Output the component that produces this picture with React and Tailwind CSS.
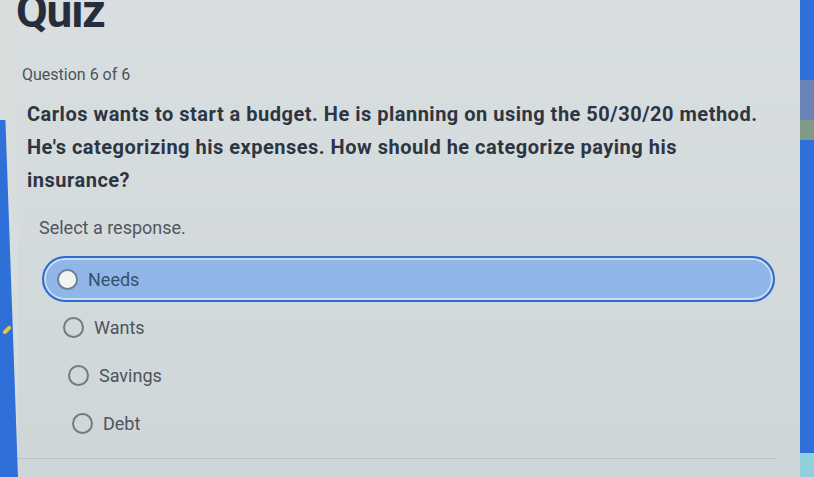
import React, { useState } from 'react';

const options = ['Needs', 'Wants', 'Savings', 'Debt'];
const indents = ['pl-[13px]', 'pl-[19px]', 'pl-[24px]', 'pl-[28px]'];

function Radio({ selected }) {
  return (
    <span
      className={
        'w-[21px] h-[21px] rounded-full border-2 shrink-0 ' +
        (selected ? 'bg-[#f2f4f4] border-[#6d7f92]' : 'bg-transparent border-[#737b82]')
      }
    />
  );
}

export default function App() {
  const [choice, setChoice] = useState('Needs');

  return (
    <div
      className="h-[477px] w-full flex overflow-hidden bg-[#d4dadb] text-[#2c3340]"
      style={{ fontFamily: 'Roboto, "Liberation Sans", sans-serif' }}
    >
      {/* left edge of the desk showing through */}
      <div className="w-[18px] shrink-0 flex flex-col bg-[#d7dddd]">
        <div className="h-[120px]" />
        <div className="flex-1 bg-[#2e6fd8] [clip-path:polygon(0_0,30%_0,100%_100%,0_100%)] flex flex-col">
          <div className="h-[205px]" />
          <span className="ml-[5px] w-[4px] h-[10px] rounded-full bg-[#e4c64a] rotate-45" />
        </div>
      </div>

      {/* Quiz card */}
      <div className="flex-1 flex flex-col bg-gradient-to-b from-[#d9dfe0] to-[#cfd6d7] pr-[25px]">
        <h1 className="text-[46px] font-bold leading-none tracking-tight text-[#262d3d] -mt-[12px] -ml-[2px]">
          Quiz
        </h1>

        <p className="mt-[29px] ml-[4px] text-[16px] leading-[24px] text-[#4b525c]">Question 6 of 6</p>

        <div className="mt-[11px] ml-[9px] text-[20px] font-bold tracking-[0.5px] leading-[33px] text-[#2e3542]">
          <span className="block whitespace-nowrap">Carlos wants to start a budget. He is planning on using the 50/30/20 method.</span>
          <span className="block whitespace-nowrap">He's categorizing his expenses. How should he categorize paying his</span>
          <span className="block">insurance?</span>
        </div>

        <p className="mt-[17px] ml-[21px] text-[18px] leading-[27px] text-[#4f565e]">Select a response.</p>

        <div className="mt-[15px] ml-[24px] flex flex-col gap-[2px]">
          {options.map((o, i) => {
            const sel = choice === o;
            return (
              <button
                key={o}
                onClick={() => setChoice(o)}
                className={
                  'h-[46px] flex items-center gap-[10px] rounded-full text-left text-[18px] border-2 ' +
                  (sel
                    ? 'bg-[#8fb6e6] border-[#2d6bd0] shadow-[inset_0_0_0_2px_#c9dcf3] text-[#37506f] '
                    : 'border-transparent text-[#4d545c] ') +
                  indents[i]
                }
              >
                <Radio selected={sel} />
                <span>{o}</span>
              </button>
            );
          })}
        </div>

        <div className="mt-auto mb-[18px] border-t border-[#b9c1c3]" />
      </div>

      {/* right edge */}
      <div className="w-[14px] shrink-0 flex flex-col bg-[#2f6fd9]">
        <div className="h-[80px]" />
        <div className="h-[40px] bg-[#6b84b8]" />
        <div className="h-[20px] bg-[#7f9a86]" />
        <div className="flex-1" />
        <div className="h-[24px] bg-[#8fd0dc]" />
      </div>
    </div>
  );
}
